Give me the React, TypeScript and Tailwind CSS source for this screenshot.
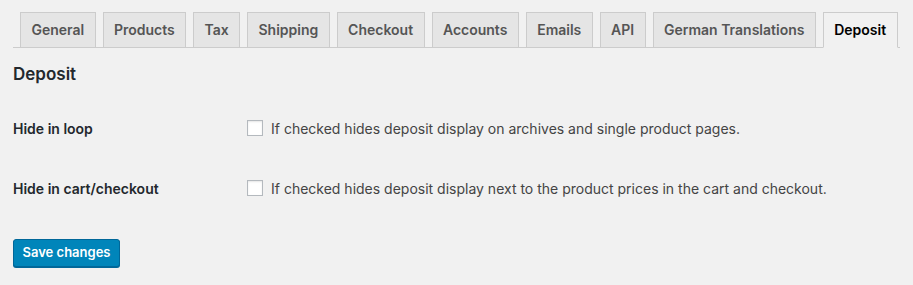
import { useState } from "react";

const tabs = ["General", "Products", "Tax", "Shipping", "Checkout", "Accounts", "Emails", "API", "German Translations", "Deposit"];

const fields = [
  { id: "hide_loop", label: "Hide in loop", desc: "If checked hides deposit display on archives and single product pages." },
  { id: "hide_cart", label: "Hide in cart/checkout", desc: "If checked hides deposit display next to the product prices in the cart and checkout." },
];

export default function App() {
  const [checked, setChecked] = useState<Record<string, boolean>>({});
  const active = "Deposit";

  return (
    <div className="min-h-[285px] w-[913px] bg-[#f1f1f1] px-[13px] pt-3 text-[14px] text-[#444]" style={{ fontFamily: 'Inter, "Liberation Sans", Arial, sans-serif' }}>
      <nav className="flex items-end gap-[7px] border-b border-[#ccc] pl-[7px]">
        {tabs.map((t) => (
          <button
            key={t}
            className={`-mb-px h-[36px] border px-[10.4px] text-[14px] font-semibold leading-[34px] ${
              t === active
                ? "border-[#ccc] border-b-[#f1f1f1] bg-[#f1f1f1] text-black"
                : "border-[#ccc] bg-[#e5e5e5] text-[#555]"
            }`}
          >
            {t}
          </button>
        ))}
      </nav>

      <h2 className="mt-[16px] text-[17px] font-semibold leading-[20px] text-[#23282d]">Deposit</h2>

      <div className="mt-[35px] flex flex-col gap-[42px]">
        {fields.map((f) => (
          <div key={f.id} className="flex h-[18px] items-center">
            <div className="w-[234px] text-[14px] font-semibold text-[#23282d]">{f.label}</div>
            <label className="flex items-center gap-[8px] text-[14px] text-[#444]">
              <input
                type="checkbox"
                checked={!!checked[f.id]}
                onChange={() => setChecked({ ...checked, [f.id]: !checked[f.id] })}
                className="h-[16px] w-[16px] appearance-none border border-[#b4b9be] bg-white shadow-[inset_0_1px_2px_rgba(0,0,0,0.1)]"
              />
              {f.desc}
            </label>
          </div>
        ))}
      </div>

      <button className="mt-[42px] h-[28px] rounded-[3px] border border-[#006799] bg-[#0085ba] px-[8.5px] text-[13px] font-semibold text-white shadow-[0_1px_0_#006799]">
        Save changes
      </button>
    </div>
  );
}
